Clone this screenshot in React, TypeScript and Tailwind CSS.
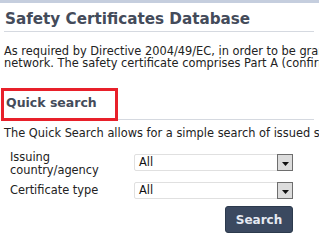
export default function App() {
  return (
    <div className="w-[319px] h-[246px] overflow-hidden bg-white font-['DejaVu_Sans',Verdana,sans-serif] text-[#222]">
      <div className="h-[3px] bg-[#c5cede]" />
      <div className="w-[700px] pl-[4px]">
        <h1 className="mt-[6px] pl-[1px] text-[15.2px] leading-[20px] font-bold text-[#444b5a]">
          Safety Certificates Database
        </h1>
        <div className="mt-[2px] mr-[386px] border-t border-[#d5d9e0]" />
        <p className="mt-[13px] text-[11.4px] leading-[12px] whitespace-nowrap">
          As required by Directive 2004/49/EC, in order to be granted access to the railway infrastructure, a railway undertaking must hold a safety certificate
          <br />
          network. The safety certificate comprises Part A (confirming approval of the railway undertaking&apos;s safety management system) and Part B
        </p>

        <div className="relative mt-[24px]">
          <h2 className="pl-[2px] text-[12.5px] leading-[20px] font-bold text-[#444b5a]">Quick search</h2>
          <div className="absolute left-[-3px] top-[-5px] z-10 h-[33px] w-[117px] border-[3px] border-[#e8202a]" />
        </div>
        <div className="mt-[6px] mr-[386px] border-t border-[#d5d9e0]" />
        <p className="mt-[7px] text-[11.4px] leading-[12px] whitespace-nowrap">
          The Quick Search allows for a simple search of issued safety certificates.
        </p>

        <div className="mt-[12px] w-[289px] pl-[6px]">
          <div className="flex items-start">
            <label className="w-[124px] text-[11.4px] leading-[13px]">
              Issuing
              <br />
              country/agency
            </label>
            <div className="mt-[3px]">
              <Select />
            </div>
          </div>
          <div className="mt-[5px] flex items-center">
            <label className="w-[124px] text-[11.4px] leading-[13px]">Certificate type</label>
            <Select />
          </div>
          <div className="mt-[7px] flex justify-end">
            <button className="h-[27px] w-[68px] rounded-[3px] border border-[#2c3a4d] bg-[#3b4960] text-[12px] font-bold text-[#e6e9f2]">
              Search
            </button>
          </div>
        </div>
      </div>
    </div>
  );
}

function Select() {
  return (
    <div className="flex h-[17px] w-[159px] items-stretch rounded-[2px] border border-[#e0e0e0] bg-white">
      <span className="flex flex-1 items-center pl-[4px] text-[11.4px] text-[#111]">All</span>
      <span className="-my-px -mr-px flex w-[16px] items-center justify-center border border-[#6e6e6e] bg-[#dcdcdc]">
        <svg width="7" height="4" viewBox="0 0 7 4" className="mt-[2px]">
          <path d="M0 0h7L3.5 4z" fill="#111" />
        </svg>
      </span>
    </div>
  );
}
